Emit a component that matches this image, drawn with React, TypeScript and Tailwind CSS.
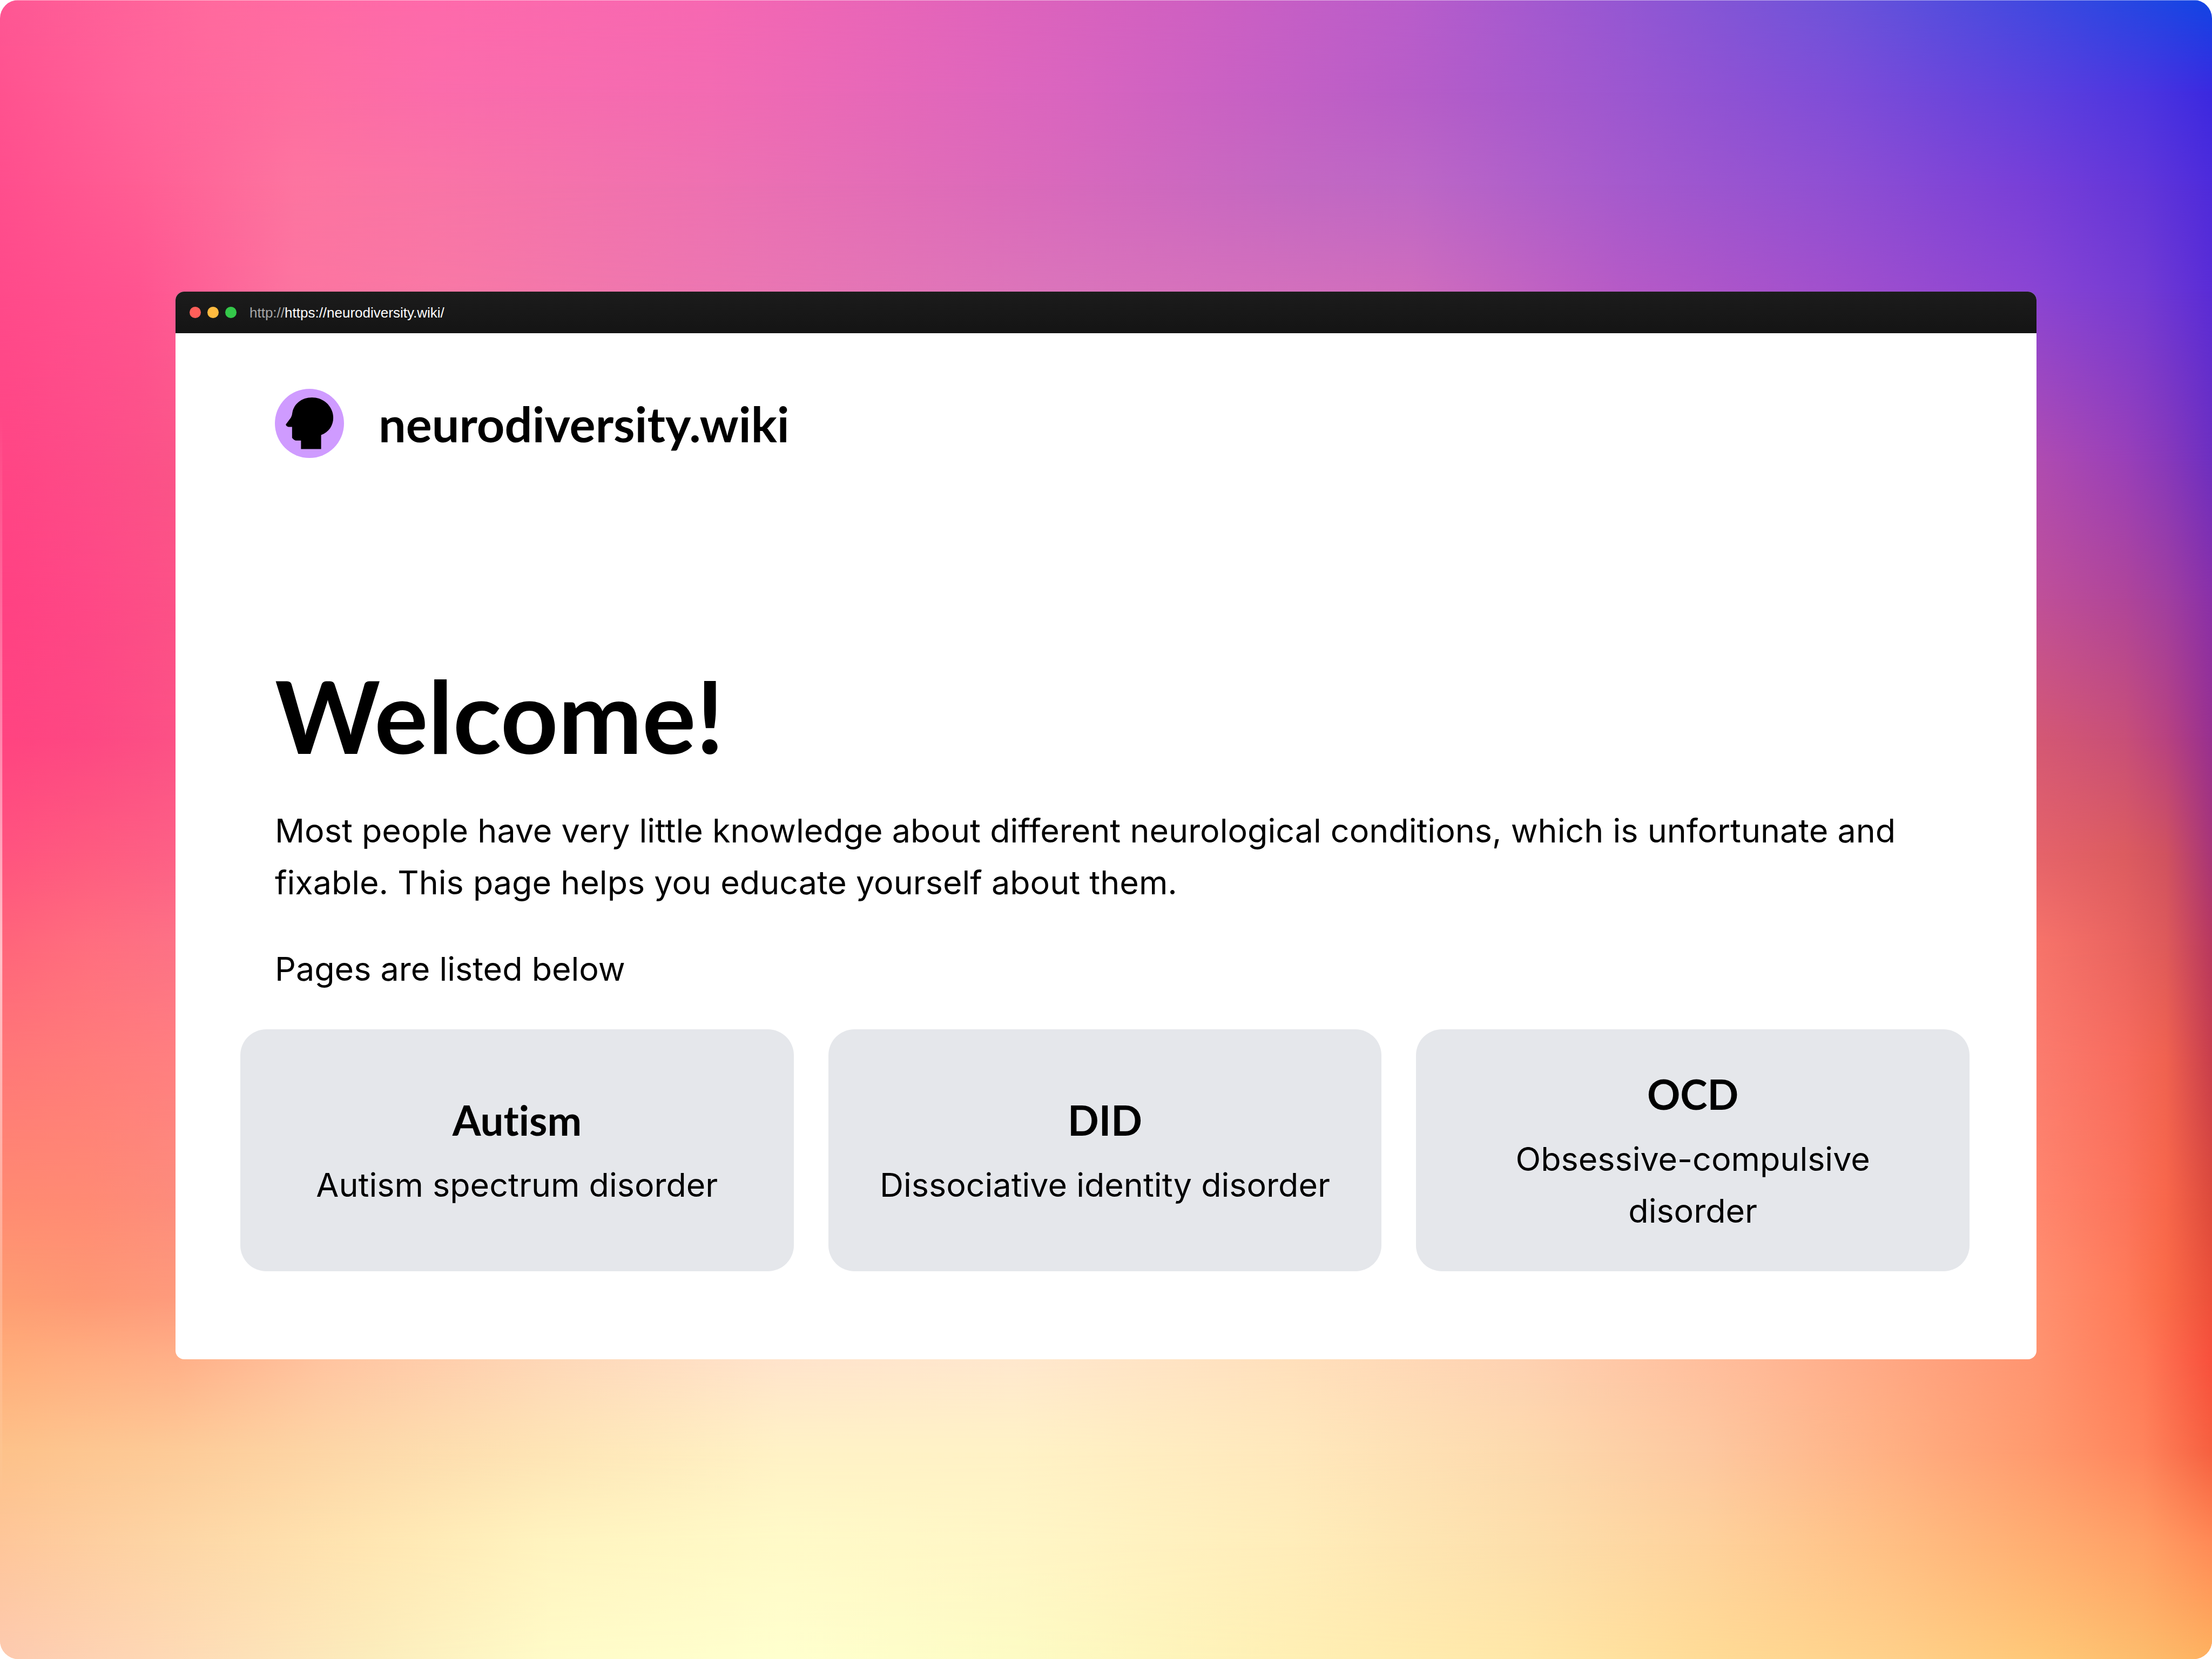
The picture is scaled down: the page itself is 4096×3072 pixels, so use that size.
type Stop = [number, string];
type Row = { y: number; stops: Stop[] };

const side = (y: number, l: [string, string, string], r: [string, string, string, string]): Row => ({
  y,
  stops: [
    [20, l[0]], [190, l[1]], [381, l[2]],
    [4419, r[0]], [4610, r[1]], [4700, r[2]], [4800, r[3]],
  ],
});

const rows: Row[] = [
  { y: 0, stops: [[0, '#fe5794'], [460, '#ff6a9e'], [950, '#fe6aab'], [1530, '#f768b2'], [2100, '#e264bb'], [2600, '#cf60c2'], [3060, '#b95dcb'], [3520, '#9557d3'], [4000, '#6c53da'], [4400, '#4249e0'], [4800, '#1145e4']] },
  { y: 200, stops: [[0, '#ff528f'], [300, '#ff639a'], [640, '#fe6ea0'], [950, '#fb6cab'], [1530, '#f36bb2'], [2300, '#da65bf'], [3060, '#b75dc8'], [3520, '#9c57d0'], [4000, '#7e4dd8'], [4400, '#5f41dd'], [4650, '#4c35e0'], [4800, '#3b29e0']] },
  { y: 400, stops: [[0, '#ff4e8d'], [300, '#ff5e94'], [640, '#fd74a0'], [950, '#f974a6'], [1530, '#ee71b1'], [2300, '#d869bc'], [2800, '#c368c2'], [3060, '#bd67c6'], [3520, '#a55acd'], [4000, '#8e4fd3'], [4400, '#783fd8'], [4650, '#6236d9'], [4800, '#4e2bdb']] },
  { y: 634, stops: [[0, '#ff4a8a'], [300, '#ff5490'], [640, '#fc74a0'], [950, '#f878a5'], [1530, '#ec76b1'], [2300, '#da74bb'], [3060, '#cf6dbd'], [3520, '#b65ac6'], [4000, '#a04fcd'], [4400, '#8b45d3'], [4650, '#743bd3'], [4800, '#5a2cd6']] },
  side(1000, ['#ff4685', '#fd4c88', '#fb5488'], ['#b04cb0', '#9a40b8', '#8839ba', '#6e2fc0']),
  side(1300, ['#ff4283', '#fe4886', '#fc5187'], ['#c05098', '#b04599', '#a13f9f', '#8a30a8']),
  side(1600, ['#ff4481', '#fd4883', '#fc5186'], ['#d45874', '#c84f78', '#b84280', '#983090']),
  side(1850, ['#ff547f', '#fe5b80', '#fd6086'], ['#e5636a', '#dc5c60', '#d05260', '#a83578']),
  side(2050, ['#ff667b', '#ff6e7f', '#fd7286'], ['#f7746a', '#ea6460', '#de5a5a', '#b8385f']),
  side(2300, ['#ff7878', '#ff7c7a', '#ff7f80'], ['#fb7c6e', '#f86c5e', '#f06250', '#c83e4c']),
  side(2600, ['#ff8a72', '#ff8a74', '#fd8c7c'], ['#ff866e', '#fc745c', '#f8674b', '#dc4a3c']),
  side(2810, ['#fe9c72', '#fe9874', '#fe9a7c'], ['#ff9070', '#ff7c5a', '#fa6b48', '#ec503a']),
  { y: 2950, stops: [[0, '#ffad7a'], [381, '#ffb088'], [700, '#ffc4a0'], [1200, '#fed8b8'], [1700, '#ffe4cc'], [2200, '#ffe8ce'], [2800, '#ffe0bc'], [3300, '#fed2b2'], [3800, '#ffba98'], [4100, '#ffa884'], [4419, '#ff9470'], [4650, '#ff7a58'], [4800, '#f8503c']] },
  { y: 3150, stops: [[0, '#fdc28a'], [381, '#fdcb98'], [800, '#fdd9aa'], [1200, '#fee5b6'], [1700, '#fff2c6'], [2200, '#fff2c6'], [2800, '#ffe8bc'], [3300, '#fddaae'], [3700, '#fdc8a0'], [4100, '#ffb083'], [4419, '#ff9a6e'], [4650, '#ff845c'], [4800, '#f66040']] },
  { y: 3350, stops: [[0, '#fec69a'], [381, '#fdd6a6'], [800, '#ffe6b2'], [1200, '#fff4c0'], [1700, '#fffac8'], [2200, '#fff6c6'], [2800, '#ffedba'], [3300, '#fddfac'], [3700, '#fed29c'], [4100, '#ffbf84'], [4419, '#ffae72'], [4650, '#ffa066'], [4800, '#ff8a56']] },
  { y: 3600, stops: [[0, '#fdcab0'], [300, '#fed6b4'], [800, '#fcecbc'], [1200, '#fffbc8'], [1700, '#ffffce'], [2200, '#fdfbc4'], [2800, '#ffefb4'], [3300, '#ffe7a8'], [3700, '#ffdb96'], [4100, '#ffd08a'], [4419, '#ffc878'], [4650, '#fdbc6c'], [4800, '#feb260']] },
];

/* Mesh gradient: each band shows its upper row and fades into the next one. */
function Backdrop() {
  return (
    <svg aria-hidden="true" className="absolute inset-0 h-full w-full" viewBox="0 0 4800 3600" preserveAspectRatio="none">
      <defs>
        <linearGradient id="fade" x1="0" y1="0" x2="0" y2="1">
          <stop offset="0" stopColor="#000" />
          <stop offset="1" stopColor="#fff" />
        </linearGradient>
        <mask id="fadeMask" maskContentUnits="objectBoundingBox" x="0" y="0" width="1" height="1" style={{ maskType: 'luminance' }} colorInterpolation="sRGB">
          <rect width="1" height="1" fill="url(#fade)" />
        </mask>
        <linearGradient id="edgeLight" x1="0" y1="0" x2="0" y2="1">
          <stop offset="0" stopColor="#fff" stopOpacity="0" />
          <stop offset="0.5" stopColor="#fff" stopOpacity="0.6" />
          <stop offset="1" stopColor="#fff" stopOpacity="0" />
        </linearGradient>
        {rows.map((row, i) => (
          <linearGradient key={row.y} id={`row${i}`} gradientUnits="userSpaceOnUse" x1="0" y1="0" x2="4800" y2="0">
            {row.stops.map(([x, color]) => (
              <stop key={x} offset={x / 4800} stopColor={color} />
            ))}
          </linearGradient>
        ))}
      </defs>
      {rows.slice(0, -1).map((row, i) => {
        const height = rows[i + 1].y - row.y;
        return (
          <g key={row.y}>
            <rect x="0" y={row.y} width="4800" height={height + 2} fill={`url(#row${i})`} />
            <rect x="0" y={row.y} width="4800" height={height + 2} fill={`url(#row${i + 1})`} mask="url(#fadeMask)" />
          </g>
        );
      })}
      <rect x="0" y="900" width="5" height="2350" fill="url(#edgeLight)" />
      <rect x="0" y="0" width="4800" height="1" fill="#fff" fillOpacity="0.6" />
    </svg>
  );
}

function Logo() {
  return (
    <svg aria-hidden="true" className="size-[128px]" viewBox="110 74 450 450">
      <circle cx="335" cy="299" r="225" fill="#cf9bff" />
      <path d="M181 306 L214 262 Q222 250 224 228 C234 172 284 130 352 130 C430 130 490 190 490 263 C490 312 462 356 411 375 V466 H280 V411 H246 Q235 409 222 393 V322 H198 Q183 318 181 306 Z" fill="#000" />
    </svg>
  );
}

const pages = [
  { title: 'Autism', text: 'Autism spectrum disorder' },
  { title: 'DID', text: 'Dissociative identity disorder' },
  { title: 'OCD', text: 'Obsessive-compulsive disorder' },
];

export default function App() {
  return (
    <div className="bg-white">
      <div className="relative min-h-screen overflow-hidden rounded-[34px] px-[325px] pt-[540px] pb-[540px]">
        <Backdrop />
        <div className="relative overflow-hidden rounded-[16px] bg-white text-black">
          <div className="flex h-[77px] items-center bg-linear-to-b from-[#1c1c1c] to-[#141414] pl-[26px]">
            <div className="flex gap-[12px]">
              <span className="size-[21px] rounded-full bg-[#ff5f5a]" />
              <span className="size-[21px] rounded-full bg-[#ffbb40]" />
              <span className="size-[21px] rounded-full bg-[#34c84a]" />
            </div>
            <p className="ml-[24px] font-['Liberation_Sans',sans-serif] text-[26px] leading-[32px] text-white">
              <span className="text-[#a6a6a6]">http://</span>https://neurodiversity.wiki/
            </p>
          </div>
          <div className="pt-[103px] pr-[188px] pb-[163px] pl-[184px] font-['Inter',sans-serif] text-[61px] leading-[96px]">
            <header>
              <a href="#home" className="inline-flex items-center gap-[64px] align-top font-['Lato',sans-serif] text-[90px] leading-[128px] font-bold [font-variant-ligatures:none]">
                <Logo />
                neurodiversity.wiki
              </a>
            </header>
            <main className="pt-[380px]">
              <h1 className="mb-[70px] font-['Lato',sans-serif] text-[186px] leading-[192px] font-bold">Welcome!</h1>
              <p className="mb-[64px]">
                Most people have very little knowledge about different neurological conditions, which is unfortunate and fixable. This page helps you educate yourself about them.
              </p>
              <p className="mb-[64px]">Pages are listed below</p>
              <nav className="-mx-[64px] grid grid-cols-3 gap-[64px]">
                {pages.map((page) => (
                  <a key={page.title} href={`#${page.title.toLowerCase()}`} className="flex min-h-[448px] flex-col items-center justify-center rounded-[48px] bg-gray-200 p-[64px] text-center">
                    <h2 className="mb-[16px] font-['Lato',sans-serif] text-[76px] leading-[112px] font-bold [font-variant-ligatures:none]">{page.title}</h2>
                    <p>{page.text}</p>
                  </a>
                ))}
              </nav>
            </main>
          </div>
        </div>
      </div>
    </div>
  );
}
